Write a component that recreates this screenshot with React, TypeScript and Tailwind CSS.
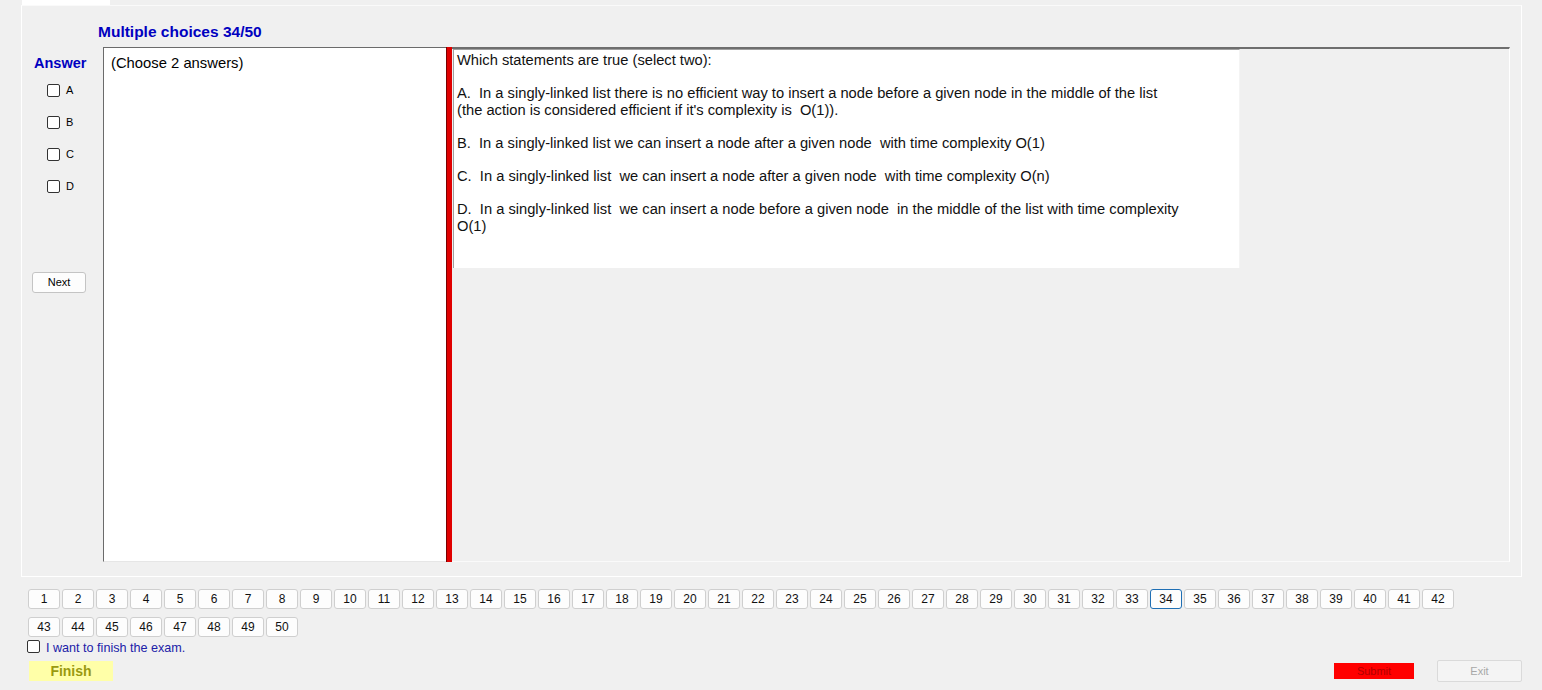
import React from "react";

const font = { fontFamily: '"Liberation Sans", Arial, sans-serif' };

function Box() {
  return <span className="inline-block w-[13px] h-[13px] border border-[#333] rounded-[2px] bg-white" />;
}

const row1 = Array.from({ length: 42 }, (_, i) => i + 1);
const row2 = Array.from({ length: 8 }, (_, i) => i + 43);

function NumBtn({ n }: { n: number }) {
  const active = n === 34;
  return (
    <div
      className={
        "w-[32px] h-[20px] flex items-center justify-center rounded-[3px] text-[12px] text-[#111] bg-[#fdfdfd] " +
        (active ? "border border-[#1f6fb4]" : "border border-[#cfcfcf]")
      }
    >
      {n}
    </div>
  );
}

export default function App() {
  return (
    <div className="w-[1542px] h-[690px] bg-[#f0f0f0] overflow-hidden text-black" style={font}>
      {/* tab header strip */}
      <div className="flex h-[5px]">
        <div className="ml-[22px] w-[88px] h-[5px] bg-white" />
      </div>
      {/* tab page */}
      <div className="ml-[21px] w-[1501px] h-[572px] border border-white border-t-[#fafafa] flex flex-col">
        <div className="ml-[76px] mt-[16px] h-[20px] leading-[20px] text-[15.5px] font-bold text-[#0000c0]">
          Multiple choices 34/50
        </div>
        <div className="mt-[5px] flex h-[515px]">
          {/* left column */}
          <div className="w-[81px] flex flex-col">
            <div className="ml-[12px] mt-[7px] h-[18px] leading-[18px] text-[14.5px] font-bold text-[#0000c0]">Answer</div>
            <div className="flex flex-col gap-[19px] mt-[12px] ml-[25px]">
              {["A", "B", "C", "D"].map((l) => (
                <div key={l} className="flex items-center h-[13px]">
                  <Box />
                  <span className="ml-[6px] text-[11px] leading-[13px]">{l}</span>
                </div>
              ))}
            </div>
            <div className="ml-[10px] mt-[79px] w-[54px] h-[21px] border border-[#c4c4c4] rounded-[3px] bg-[#fdfdfd] flex items-center justify-center text-[11px]">
              Next
            </div>
          </div>
          {/* group */}
          <div className="w-[1407px] flex">
            <div className="w-[343px] h-full bg-white border-t border-l border-[#6b6b6b] border-b border-b-[#e6e6e6] pl-[7px] pt-[6px]">
              <div className="text-[14.8px] leading-[18px]">(Choose 2 answers)</div>
            </div>
            <div className="w-[6px] h-full bg-[#e00000] border-l border-[#7a0000]" />
            <div className="flex-1 h-full border-t-2 border-[#6e6e6e] border-r border-r-white border-b border-b-[#fafafa] bg-[#f0f0f0]">
              <div className="ml-[1px] w-[787px] h-[219px] bg-white border-t border-l border-[#a0a0a0] border-r border-r-[#f4f4f4] pl-[3px] pt-[2px]">
                <div className="text-[14.7px] leading-[16.6px] whitespace-pre-wrap text-[#111]">
{`Which statements are true (select two):

A.  In a singly-linked list there is no efficient way to insert a node before a given node in the middle of the list
(the action is considered efficient if it's complexity is  O(1)).

B.  In a singly-linked list we can insert a node after a given node  with time complexity O(1)

C.  In a singly-linked list  we can insert a node after a given node  with time complexity O(n)

D.  In a singly-linked list  we can insert a node before a given node  in the middle of the list with time complexity
O(1)`}
                </div>
              </div>
            </div>
          </div>
        </div>
      </div>
      {/* number buttons */}
      <div className="ml-[28px] mt-[12px] flex flex-col gap-[8px]">
        <div className="flex gap-[2px]">
          {row1.map((n) => (
            <NumBtn key={n} n={n} />
          ))}
        </div>
        <div className="flex gap-[2px]">
          {row2.map((n) => (
            <NumBtn key={n} n={n} />
          ))}
        </div>
      </div>
      <div className="ml-[27px] mt-[2px] flex items-center h-[14px]">
        <Box />
        <span className="ml-[6px] text-[12.6px] text-[#2020a8] leading-[14px] mt-[4px]">I want to finish the exam.</span>
      </div>
      <div className="mt-[7px] flex items-center h-[22px]">
        <div className="ml-[29px] w-[84px] h-[20px] bg-[#ffffa8] flex items-center justify-center text-[14px] font-bold text-[#9a9a10]">
          Finish
        </div>
        <div className="ml-[1221px] w-[80px] h-[16px] bg-[#ff0000] flex items-center justify-center text-[11px] text-[#b00000]">
          Submit
        </div>
        <div className="ml-[23px] w-[85px] h-[22px] border border-[#dadada] rounded-[2px] bg-[#f4f4f4] flex items-center justify-center text-[11px] text-[#a8a8a8]">
          Exit
        </div>
      </div>
    </div>
  );
}
